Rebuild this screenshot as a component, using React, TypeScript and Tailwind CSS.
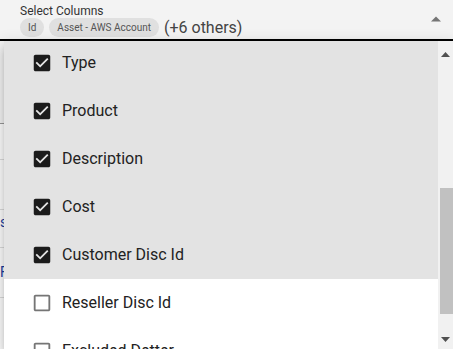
import React from "react";

const CHECKED =
  "M19 3H5c-1.11 0-2 .9-2 2v14c0 1.1.89 2 2 2h14c1.11 0 2-.9 2-2V5c0-1.1-.89-2-2-2zm-9 14l-5-5 1.41-1.41L10 14.17l7.59-7.59L19 8l-9 9z";
const BLANK =
  "M19 5v14H5V5h14m0-2H5c-1.1 0-2 .9-2 2v14c0 1.1.9 2 2 2h14c1.1 0 2-.9 2-2V5c0-1.1-.9-2-2-2z";

const items: { label: string; checked: boolean }[] = [
  { label: "Type", checked: true },
  { label: "Product", checked: true },
  { label: "Description", checked: true },
  { label: "Cost", checked: true },
  { label: "Customer Disc Id", checked: true },
  { label: "Reseller Disc Id", checked: false },
  { label: "Excluded Detter", checked: false },
];

export default function App() {
  return (
    <div
      className="relative w-[453px] h-[349px] overflow-hidden bg-white"
      style={{ fontFamily: "Roboto, 'Liberation Sans', sans-serif" }}
    >
      {/* filled select */}
      <div className="h-[39px] bg-[#f3f3f3] flex items-start pl-[20px] pr-[10px] relative border-b-2 border-black box-content">
        <div className="flex flex-col flex-1">
          <div className="text-[12px] leading-[14px] text-[#333] mt-[4px]">Select Columns</div>
          <div className="flex items-center gap-[5px] mt-[0px]">
            <span className="h-[19px] px-[8px] rounded-full bg-[#e0e0e0] text-[10px] leading-[19px] text-[#555]">Id</span>
            <span className="h-[19px] px-[8px] rounded-full bg-[#e0e0e0] text-[10px] leading-[19px] text-[#555]">Asset - AWS Account</span>
            <span className="text-[16px] leading-[18px] text-[#444]">(+6 others)</span>
          </div>
        </div>
        <svg width="10" height="6" viewBox="0 0 10 6" className="mt-[16px] mr-[2px]">
          <path d="M0 5.5 L5 0.5 L10 5.5Z" fill="#757575" />
        </svg>
      </div>

      {/* background table hint */}
      <div className="flex flex-col text-[14px] text-[#1a3fa0]">
        <div className="h-[82px] bg-[#f5f5f5]" />
        <div className="h-[36px] border-t border-[#999]" />
        <div className="h-[50px] border-t border-[#ddd]" />
        <div className="h-[38px] border-t border-[#ddd] leading-[24px]">s</div>
        <div className="h-[50px] border-t border-[#ddd] leading-[48px]">F</div>
        <div className="h-[50px] border-t border-[#ddd]" />
      </div>

      {/* menu overlay */}
      <div className="absolute left-[4px] top-[41px] w-[449px] h-[308px] flex bg-white shadow-[0_5px_5px_-3px_rgba(0,0,0,0.2),0_8px_10px_1px_rgba(0,0,0,0.14),0_3px_14px_2px_rgba(0,0,0,0.12)]">
        <div className="flex-1 flex flex-col overflow-hidden">
          <div className="flex flex-col mt-[-2px]">
            {items.map((it) => (
              <div
                key={it.label}
                className={`h-[48px] shrink-0 flex items-center pl-[27px] ${it.checked ? "bg-[#e3e3e3]" : "bg-white"}`}
              >
                <svg width="22" height="22" viewBox="0 0 24 24" className="shrink-0">
                  <path d={it.checked ? CHECKED : BLANK} fill={it.checked ? "#1b1b1b" : "#757575"} />
                </svg>
                <span className="ml-[9px] text-[16px] text-[#222] leading-[20px]">{it.label}</span>
              </div>
            ))}
          </div>
        </div>
        {/* scrollbar */}
        <div className="w-[15px] bg-[#f1f1f1] flex flex-col items-center">
          <svg width="9" height="5" viewBox="0 0 9 5" className="mt-[11px]">
            <path d="M0 5 L4.5 0 L9 5Z" fill="#505050" />
          </svg>
          <div className="h-[131px]" />
          <div className="w-[13px] ml-[2px] h-[126px] bg-[#c1c1c1]" />
          <div className="flex-1" />
          <svg width="9" height="5" viewBox="0 0 9 5" className="mb-[7px]">
            <path d="M0 0 L4.5 5 L9 0Z" fill="#505050" />
          </svg>
        </div>
      </div>
    </div>
  );
}
